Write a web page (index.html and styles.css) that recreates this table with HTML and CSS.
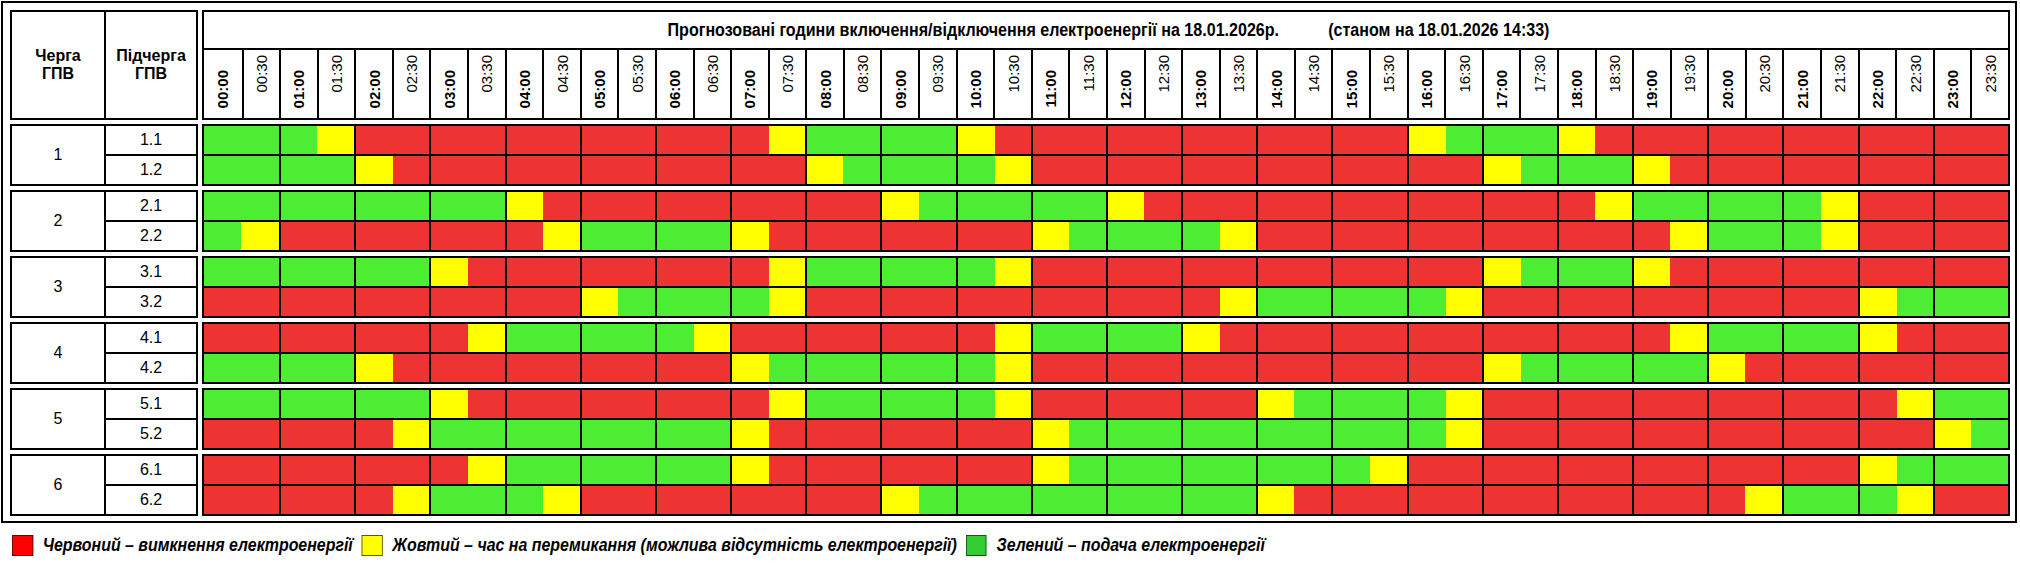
FILE: index.html
```html
<!DOCTYPE html>
<html lang="uk">
<head>
<meta charset="utf-8">
<title>Графік ГПВ</title>
<link rel="stylesheet" href="styles.css">
</head>
<body>
<div class="frame">
  <div class="head">
    <div class="hleft">
      <div class="hq">Черга<br>ГПВ</div>
      <div class="hs">Підчерга<br>ГПВ</div>
    </div>
    <div class="hright">
      <div class="title"><span class="ttext">Прогнозовані години включення/відключення електроенергії на 18.01.2026р.<span class="stamp">(станом на 18.01.2026 14:33)</span></span></div>
      <div class="times">
        <div class="t b"><span>00:00</span></div><div class="t r"><span>00:30</span></div>
        <div class="t b"><span>01:00</span></div><div class="t r"><span>01:30</span></div>
        <div class="t b"><span>02:00</span></div><div class="t r"><span>02:30</span></div>
        <div class="t b"><span>03:00</span></div><div class="t r"><span>03:30</span></div>
        <div class="t b"><span>04:00</span></div><div class="t r"><span>04:30</span></div>
        <div class="t b"><span>05:00</span></div><div class="t r"><span>05:30</span></div>
        <div class="t b"><span>06:00</span></div><div class="t r"><span>06:30</span></div>
        <div class="t b"><span>07:00</span></div><div class="t r"><span>07:30</span></div>
        <div class="t b"><span>08:00</span></div><div class="t r"><span>08:30</span></div>
        <div class="t b"><span>09:00</span></div><div class="t r"><span>09:30</span></div>
        <div class="t b"><span>10:00</span></div><div class="t r"><span>10:30</span></div>
        <div class="t b"><span>11:00</span></div><div class="t r"><span>11:30</span></div>
        <div class="t b"><span>12:00</span></div><div class="t r"><span>12:30</span></div>
        <div class="t b"><span>13:00</span></div><div class="t r"><span>13:30</span></div>
        <div class="t b"><span>14:00</span></div><div class="t r"><span>14:30</span></div>
        <div class="t b"><span>15:00</span></div><div class="t r"><span>15:30</span></div>
        <div class="t b"><span>16:00</span></div><div class="t r"><span>16:30</span></div>
        <div class="t b"><span>17:00</span></div><div class="t r"><span>17:30</span></div>
        <div class="t b"><span>18:00</span></div><div class="t r"><span>18:30</span></div>
        <div class="t b"><span>19:00</span></div><div class="t r"><span>19:30</span></div>
        <div class="t b"><span>20:00</span></div><div class="t r"><span>20:30</span></div>
        <div class="t b"><span>21:00</span></div><div class="t r"><span>21:30</span></div>
        <div class="t b"><span>22:00</span></div><div class="t r"><span>22:30</span></div>
        <div class="t b"><span>23:00</span></div><div class="t r"><span>23:30</span></div>
      </div>
    </div>
  </div>

  <div class="grp">
    <div class="qleft"><div class="q">1</div><div class="subs"><div class="sub">1.1</div><div class="sub">1.2</div></div></div>
    <div class="qgrid">
      <div class="row"><div class="gg"></div><div class="gy"></div><div class="rr"></div><div class="rr"></div><div class="rr"></div><div class="rr"></div><div class="rr"></div><div class="ry"></div><div class="gg"></div><div class="gg"></div><div class="yr"></div><div class="rr"></div><div class="rr"></div><div class="rr"></div><div class="rr"></div><div class="rr"></div><div class="yg"></div><div class="gg"></div><div class="yr"></div><div class="rr"></div><div class="rr"></div><div class="rr"></div><div class="rr"></div><div class="rr"></div></div>
      <div class="row"><div class="gg"></div><div class="gg"></div><div class="yr"></div><div class="rr"></div><div class="rr"></div><div class="rr"></div><div class="rr"></div><div class="rr"></div><div class="yg"></div><div class="gg"></div><div class="gy"></div><div class="rr"></div><div class="rr"></div><div class="rr"></div><div class="rr"></div><div class="rr"></div><div class="rr"></div><div class="yg"></div><div class="gg"></div><div class="yr"></div><div class="rr"></div><div class="rr"></div><div class="rr"></div><div class="rr"></div></div>
    </div>
  </div>

  <div class="grp">
    <div class="qleft"><div class="q">2</div><div class="subs"><div class="sub">2.1</div><div class="sub">2.2</div></div></div>
    <div class="qgrid">
      <div class="row"><div class="gg"></div><div class="gg"></div><div class="gg"></div><div class="gg"></div><div class="yr"></div><div class="rr"></div><div class="rr"></div><div class="rr"></div><div class="rr"></div><div class="yg"></div><div class="gg"></div><div class="gg"></div><div class="yr"></div><div class="rr"></div><div class="rr"></div><div class="rr"></div><div class="rr"></div><div class="rr"></div><div class="ry"></div><div class="gg"></div><div class="gg"></div><div class="gy"></div><div class="rr"></div><div class="rr"></div></div>
      <div class="row"><div class="gy"></div><div class="rr"></div><div class="rr"></div><div class="rr"></div><div class="ry"></div><div class="gg"></div><div class="gg"></div><div class="yr"></div><div class="rr"></div><div class="rr"></div><div class="rr"></div><div class="yg"></div><div class="gg"></div><div class="gy"></div><div class="rr"></div><div class="rr"></div><div class="rr"></div><div class="rr"></div><div class="rr"></div><div class="ry"></div><div class="gg"></div><div class="gy"></div><div class="rr"></div><div class="rr"></div></div>
    </div>
  </div>

  <div class="grp">
    <div class="qleft"><div class="q">3</div><div class="subs"><div class="sub">3.1</div><div class="sub">3.2</div></div></div>
    <div class="qgrid">
      <div class="row"><div class="gg"></div><div class="gg"></div><div class="gg"></div><div class="yr"></div><div class="rr"></div><div class="rr"></div><div class="rr"></div><div class="ry"></div><div class="gg"></div><div class="gg"></div><div class="gy"></div><div class="rr"></div><div class="rr"></div><div class="rr"></div><div class="rr"></div><div class="rr"></div><div class="rr"></div><div class="yg"></div><div class="gg"></div><div class="yr"></div><div class="rr"></div><div class="rr"></div><div class="rr"></div><div class="rr"></div></div>
      <div class="row"><div class="rr"></div><div class="rr"></div><div class="rr"></div><div class="rr"></div><div class="rr"></div><div class="yg"></div><div class="gg"></div><div class="gy"></div><div class="rr"></div><div class="rr"></div><div class="rr"></div><div class="rr"></div><div class="rr"></div><div class="ry"></div><div class="gg"></div><div class="gg"></div><div class="gy"></div><div class="rr"></div><div class="rr"></div><div class="rr"></div><div class="rr"></div><div class="rr"></div><div class="yg"></div><div class="gg"></div></div>
    </div>
  </div>

  <div class="grp">
    <div class="qleft"><div class="q">4</div><div class="subs"><div class="sub">4.1</div><div class="sub">4.2</div></div></div>
    <div class="qgrid">
      <div class="row"><div class="rr"></div><div class="rr"></div><div class="rr"></div><div class="ry"></div><div class="gg"></div><div class="gg"></div><div class="gy"></div><div class="rr"></div><div class="rr"></div><div class="rr"></div><div class="ry"></div><div class="gg"></div><div class="gg"></div><div class="yr"></div><div class="rr"></div><div class="rr"></div><div class="rr"></div><div class="rr"></div><div class="rr"></div><div class="ry"></div><div class="gg"></div><div class="gg"></div><div class="yr"></div><div class="rr"></div></div>
      <div class="row"><div class="gg"></div><div class="gg"></div><div class="yr"></div><div class="rr"></div><div class="rr"></div><div class="rr"></div><div class="rr"></div><div class="yg"></div><div class="gg"></div><div class="gg"></div><div class="gy"></div><div class="rr"></div><div class="rr"></div><div class="rr"></div><div class="rr"></div><div class="rr"></div><div class="rr"></div><div class="yg"></div><div class="gg"></div><div class="gg"></div><div class="yr"></div><div class="rr"></div><div class="rr"></div><div class="rr"></div></div>
    </div>
  </div>

  <div class="grp">
    <div class="qleft"><div class="q">5</div><div class="subs"><div class="sub">5.1</div><div class="sub">5.2</div></div></div>
    <div class="qgrid">
      <div class="row"><div class="gg"></div><div class="gg"></div><div class="gg"></div><div class="yr"></div><div class="rr"></div><div class="rr"></div><div class="rr"></div><div class="ry"></div><div class="gg"></div><div class="gg"></div><div class="gy"></div><div class="rr"></div><div class="rr"></div><div class="rr"></div><div class="yg"></div><div class="gg"></div><div class="gy"></div><div class="rr"></div><div class="rr"></div><div class="rr"></div><div class="rr"></div><div class="rr"></div><div class="ry"></div><div class="gg"></div></div>
      <div class="row"><div class="rr"></div><div class="rr"></div><div class="ry"></div><div class="gg"></div><div class="gg"></div><div class="gg"></div><div class="gg"></div><div class="yr"></div><div class="rr"></div><div class="rr"></div><div class="rr"></div><div class="yg"></div><div class="gg"></div><div class="gg"></div><div class="gg"></div><div class="gg"></div><div class="gy"></div><div class="rr"></div><div class="rr"></div><div class="rr"></div><div class="rr"></div><div class="rr"></div><div class="rr"></div><div class="yg"></div></div>
    </div>
  </div>

  <div class="grp">
    <div class="qleft"><div class="q">6</div><div class="subs"><div class="sub">6.1</div><div class="sub">6.2</div></div></div>
    <div class="qgrid">
      <div class="row"><div class="rr"></div><div class="rr"></div><div class="rr"></div><div class="ry"></div><div class="gg"></div><div class="gg"></div><div class="gg"></div><div class="yr"></div><div class="rr"></div><div class="rr"></div><div class="rr"></div><div class="yg"></div><div class="gg"></div><div class="gg"></div><div class="gg"></div><div class="gy"></div><div class="rr"></div><div class="rr"></div><div class="rr"></div><div class="rr"></div><div class="rr"></div><div class="rr"></div><div class="yg"></div><div class="gg"></div></div>
      <div class="row"><div class="rr"></div><div class="rr"></div><div class="ry"></div><div class="gg"></div><div class="gy"></div><div class="rr"></div><div class="rr"></div><div class="rr"></div><div class="rr"></div><div class="yg"></div><div class="gg"></div><div class="gg"></div><div class="gg"></div><div class="gg"></div><div class="yr"></div><div class="rr"></div><div class="rr"></div><div class="rr"></div><div class="rr"></div><div class="rr"></div><div class="ry"></div><div class="gg"></div><div class="gy"></div><div class="rr"></div></div>
    </div>
  </div>
</div>

<div class="legend">
  <div class="item"><span class="sw sw-red"></span><span class="lt">Червоний – вимкнення електроенергії</span></div>
  <div class="item"><span class="sw sw-yellow"></span><span class="lt">Жовтий – час на перемикання (можлива відсутність електроенергії)</span></div>
  <div class="item"><span class="sw sw-green"></span><span class="lt">Зелений – подача електроенергії</span></div>
</div>
</body>
</html>
```
FILE: styles.css
```css
* { box-sizing: border-box; }

body {
  margin: 0;
  background: #fff;
  color: #000;
  font-family: "Liberation Sans", Arial, sans-serif;
}

.frame {
  width: 2016px;
  margin: 1px 0 0 1px;
  border: 2px solid #000;
  padding: 7px 5px 5px 7px;
}

/* header */
.head {
  display: flex;
  height: 110px;
}

.hleft {
  width: 188px;
  border: 2px solid #000;
  display: flex;
}

.hq,
.hs {
  display: flex;
  align-items: center;
  justify-content: center;
  text-align: center;
  font-weight: bold;
  font-size: 16px;
  line-height: 18px;
}

.hq {
  width: 94px;
  border-right: 2px solid #000;
}

.hs { flex: 1; }

.hright {
  flex: 1;
  margin-left: 4px;
  border: 2px solid #000;
  display: flex;
  flex-direction: column;
}

.title {
  height: 38px;
  border-bottom: 2px solid #000;
  display: flex;
  align-items: center;
  justify-content: center;
  font-weight: bold;
  font-size: 18px;
  white-space: nowrap;
}

/* narrow (condensed) face emulated by horizontal scaling */
.ttext {
  display: inline-block;
  transform: scaleX(0.893);
  padding-left: 6px;
}

.stamp { margin-left: 55px; }

.times {
  flex: 1;
  display: grid;
  grid-template-columns: repeat(48, 1fr);
}

.t {
  border-left: 2px solid #000;
  display: flex;
  justify-content: center;
}

.t:first-child { border-left: 0; }

.t span {
  writing-mode: vertical-rl;
  transform: rotate(180deg);
  font-size: 15px;
  line-height: 17px;
}

.t.b {
  align-items: flex-end;
  padding-bottom: 10px;
}

.t.b span { font-weight: bold; }

.t.r {
  align-items: flex-start;
  padding-top: 5px;
}

/* groups */
.grp {
  display: flex;
  height: 62px;
  margin-top: 4px;
}

.qleft {
  width: 188px;
  border: 2px solid #000;
  display: flex;
}

.q {
  width: 94px;
  border-right: 2px solid #000;
  display: flex;
  align-items: center;
  justify-content: center;
  font-size: 16px;
}

.subs {
  flex: 1;
  display: flex;
  flex-direction: column;
}

.sub {
  height: 28px;
  display: flex;
  align-items: center;
  justify-content: center;
  font-size: 16px;
}

.sub:first-child {
  height: 30px;
  border-bottom: 2px solid #000;
}

.qgrid {
  flex: 1;
  margin-left: 4px;
  border: 2px solid #000;
  display: flex;
  flex-direction: column;
}

.row {
  height: 28px;
  display: grid;
  grid-template-columns: repeat(24, 1fr);
}

.row:first-child {
  height: 30px;
  border-bottom: 2px solid #000;
}

.row > div { border-left: 2px solid #000; }
.row > div:first-child { border-left: 0; }

.gg { background: #4ded33; }
.rr { background: #ee3333; }
.gy { background: linear-gradient(to right, #4ded33 50%, #ffff00 50%); }
.yg { background: linear-gradient(to right, #ffff00 50%, #4ded33 50%); }
.ry { background: linear-gradient(to right, #ee3333 50%, #ffff00 50%); }
.yr { background: linear-gradient(to right, #ffff00 50%, #ee3333 50%); }

/* legend: condensed italic face emulated by horizontal scaling */
.legend {
  display: flex;
  align-items: center;
  margin: 12px 0 0 12px;
  font-style: italic;
  font-weight: bold;
  font-size: 18px;
  transform: scaleX(0.885);
  transform-origin: 0 0;
}

.item {
  display: flex;
  align-items: center;
  margin-right: 10px;
}

.sw {
  width: 23.7px;
  height: 21px;
  margin-right: 11px;
  border: 1px solid #5a1010;
}

.sw-red { background: #ff0000; border-color: #6a0000; }
.sw-yellow { background: #ffff00; border-color: #5a5a00; }
.sw-green { background: #33cc33; border-color: #0f5a0f; }
```
